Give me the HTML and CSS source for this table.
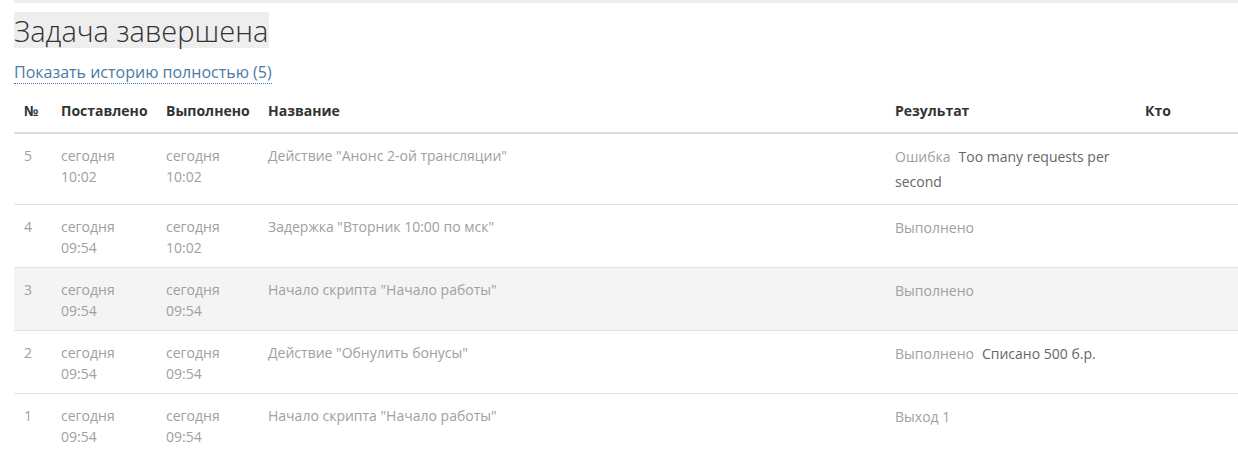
FILE: index.html
```html
<!DOCTYPE html>
<html lang="ru">
<head>
<meta charset="utf-8">
<title>Задача завершена</title>
<link rel="stylesheet" href="styles.css">
</head>
<body>
<div class="page">
  <div class="topbar"></div>
  <h1 class="title">Задача завершена</h1>
  <div class="history"><a class="history-link" href="#">Показать историю полностью (5)</a></div>
  <table class="log">
    <colgroup>
      <col class="c-num"><col class="c-set"><col class="c-done"><col class="c-name"><col class="c-res"><col class="c-who">
    </colgroup>
    <thead>
      <tr><th>№</th><th>Поставлено</th><th>Выполнено</th><th>Название</th><th>Результат</th><th>Кто</th></tr>
    </thead>
    <tbody>
      <tr>
        <td>5</td><td>сегодня<br>10:02</td><td>сегодня<br>10:02</td><td>Действие "Анонс 2-ой трансляции"</td>
        <td class="res"><span class="status">Ошибка</span><span class="msg">Too many requests per second</span></td><td></td>
      </tr>
      <tr>
        <td>4</td><td>сегодня<br>09:54</td><td>сегодня<br>10:02</td><td>Задержка "Вторник 10:00 по мск"</td>
        <td class="res"><span class="status">Выполнено</span></td><td></td>
      </tr>
      <tr class="shaded">
        <td>3</td><td>сегодня<br>09:54</td><td>сегодня<br>09:54</td><td>Начало скрипта "Начало работы"</td>
        <td class="res"><span class="status">Выполнено</span></td><td></td>
      </tr>
      <tr>
        <td>2</td><td>сегодня<br>09:54</td><td>сегодня<br>09:54</td><td>Действие "Обнулить бонусы"</td>
        <td class="res"><span class="status">Выполнено</span><span class="msg">Списано 500 б.р.</span></td><td></td>
      </tr>
      <tr>
        <td>1</td><td>сегодня<br>09:54</td><td>сегодня<br>09:54</td><td>Начало скрипта "Начало работы"</td>
        <td class="res"><span class="status">Выход 1</span></td><td></td>
      </tr>
    </tbody>
  </table>
</div>
</body>
</html>
```
FILE: styles.css
```css
html, body {
  margin: 0;
  padding: 0;
  background: #fff;
}
body {
  font-family: "Open Sans", "Liberation Sans", sans-serif;
  font-size: 14px;
  color: #333;
}
.page {
  padding-left: 14px;
}
.topbar {
  height: 3px;
  background: #eeeeee;
}
.title {
  display: inline-block;
  margin: 9px 0 0;
  padding: 0 1px 0 0;
  height: 36px;
  line-height: 37px;
  font-size: 29px;
  font-weight: 300;
  color: #333;
  background: #eeeeee;
}
.history {
  margin-top: 13px;
  line-height: 22px;
}
.history-link {
  font-size: 16px;
  color: #4a7ba6;
  text-decoration: none;
  border-bottom: 1px dotted #4a7ba6;
}
.log {
  width: 100%;
  margin-top: 11px;
  border-collapse: collapse;
  table-layout: fixed;
}
.c-num { width: 37px; }
.c-set { width: 105px; }
.c-done { width: 102px; }
.c-name { width: 627px; }
.c-res { width: 250px; }
.log th {
  text-align: left;
  font-weight: 700;
  font-size: 14px;
  color: #333;
  padding: 6px 10px 11px;
  line-height: 20px;
  border-bottom: 2px solid #dddddd;
}
.log td {
  vertical-align: top;
  padding: 11px 10px 9px;
  line-height: 21px;
  color: #a0a0a0;
  border-bottom: 1px solid #e2e2e2;
}
.log tbody tr:last-child td {
  border-bottom: none;
}
.log tr.shaded td {
  background: #f4f4f4;
}
.log td.res {
  line-height: 25px;
  padding-top: 10px;
  padding-bottom: 10px;
}
.status {
  color: #a0a0a0;
  margin-right: 8px;
}
.msg {
  color: #666;
}
```
